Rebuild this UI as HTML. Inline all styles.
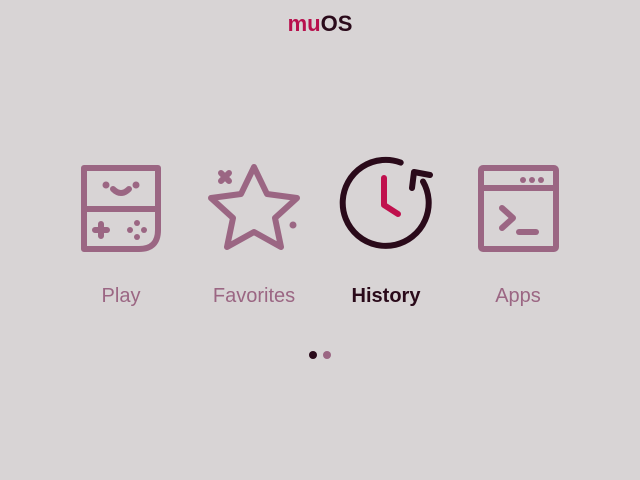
<!DOCTYPE html>
<html><head><style>
html,body{margin:0;padding:0;background:#d8d4d5;width:640px;height:480px;overflow:hidden}
</style></head><body>
<svg width="640" height="480" xmlns="http://www.w3.org/2000/svg">
<rect width="640" height="480" fill="#d8d4d5"/>
<text x="320" y="31" text-anchor="middle" font-family="Liberation Sans, sans-serif" font-weight="bold" font-size="22"><tspan fill="#b8104d">mu</tspan><tspan fill="#2a0a1a">OS</tspan></text>
<g fill="none" stroke="#9b6683" stroke-width="6" stroke-linecap="round" stroke-linejoin="round">
<path d="M84 168 H158 V230 Q158 249 139 249 H84 Z"/>
<path d="M84 209 H158"/>
<path d="M113 189 Q121 197 129 189"/>
<path d="M95 230 H107 M101 224 V236"/>
<path d="M254 167 L267 194 L297 198 L275 218 L281 247 L254 232 L227 247 L233 218 L211 198 L241 194 Z"/>
<path d="M221 173 L229 181 M229 173 L221 181"/>
<rect x="481" y="168" width="75" height="81" rx="2"/>
<path d="M481 188 H556"/>
<path d="M502 208 L513 218 L502 228"/>
<path d="M519 232 H536"/>
</g>
<g fill="#9b6683">
<circle cx="106" cy="185" r="3.5"/><circle cx="136" cy="185" r="3.5"/>
<circle cx="137" cy="223" r="3"/><circle cx="137" cy="237" r="3"/><circle cx="130" cy="230" r="3"/><circle cx="144" cy="230" r="3"/>
<circle cx="293" cy="225" r="3.5"/>
<circle cx="523" cy="180" r="3"/><circle cx="532" cy="180" r="3"/><circle cx="541" cy="180" r="3"/>
</g>
<g fill="none" stroke="#2a0a1a" stroke-width="6" stroke-linecap="round" stroke-linejoin="round">
<path d="M400.7 162.6 A43 43 0 1 0 423 181.5"/>
<path d="M412 188 L414 172 L430 175"/>
</g>
<path d="M384 178 V205 L398 214" fill="none" stroke="#c0104d" stroke-width="6" stroke-linecap="round" stroke-linejoin="round"/>
<g font-family="Liberation Sans, sans-serif" font-size="20" text-anchor="middle">
<text x="121" y="302" fill="#9b6683">Play</text>
<text x="254" y="302" fill="#9b6683">Favorites</text>
<text x="386" y="302" fill="#2a0a1a" font-weight="bold">History</text>
<text x="518" y="302" fill="#9b6683">Apps</text>
</g>
<circle cx="313" cy="355" r="4" fill="#2a0a1a"/>
<circle cx="327" cy="355" r="4" fill="#9b6683"/>
</svg>
</body></html>
